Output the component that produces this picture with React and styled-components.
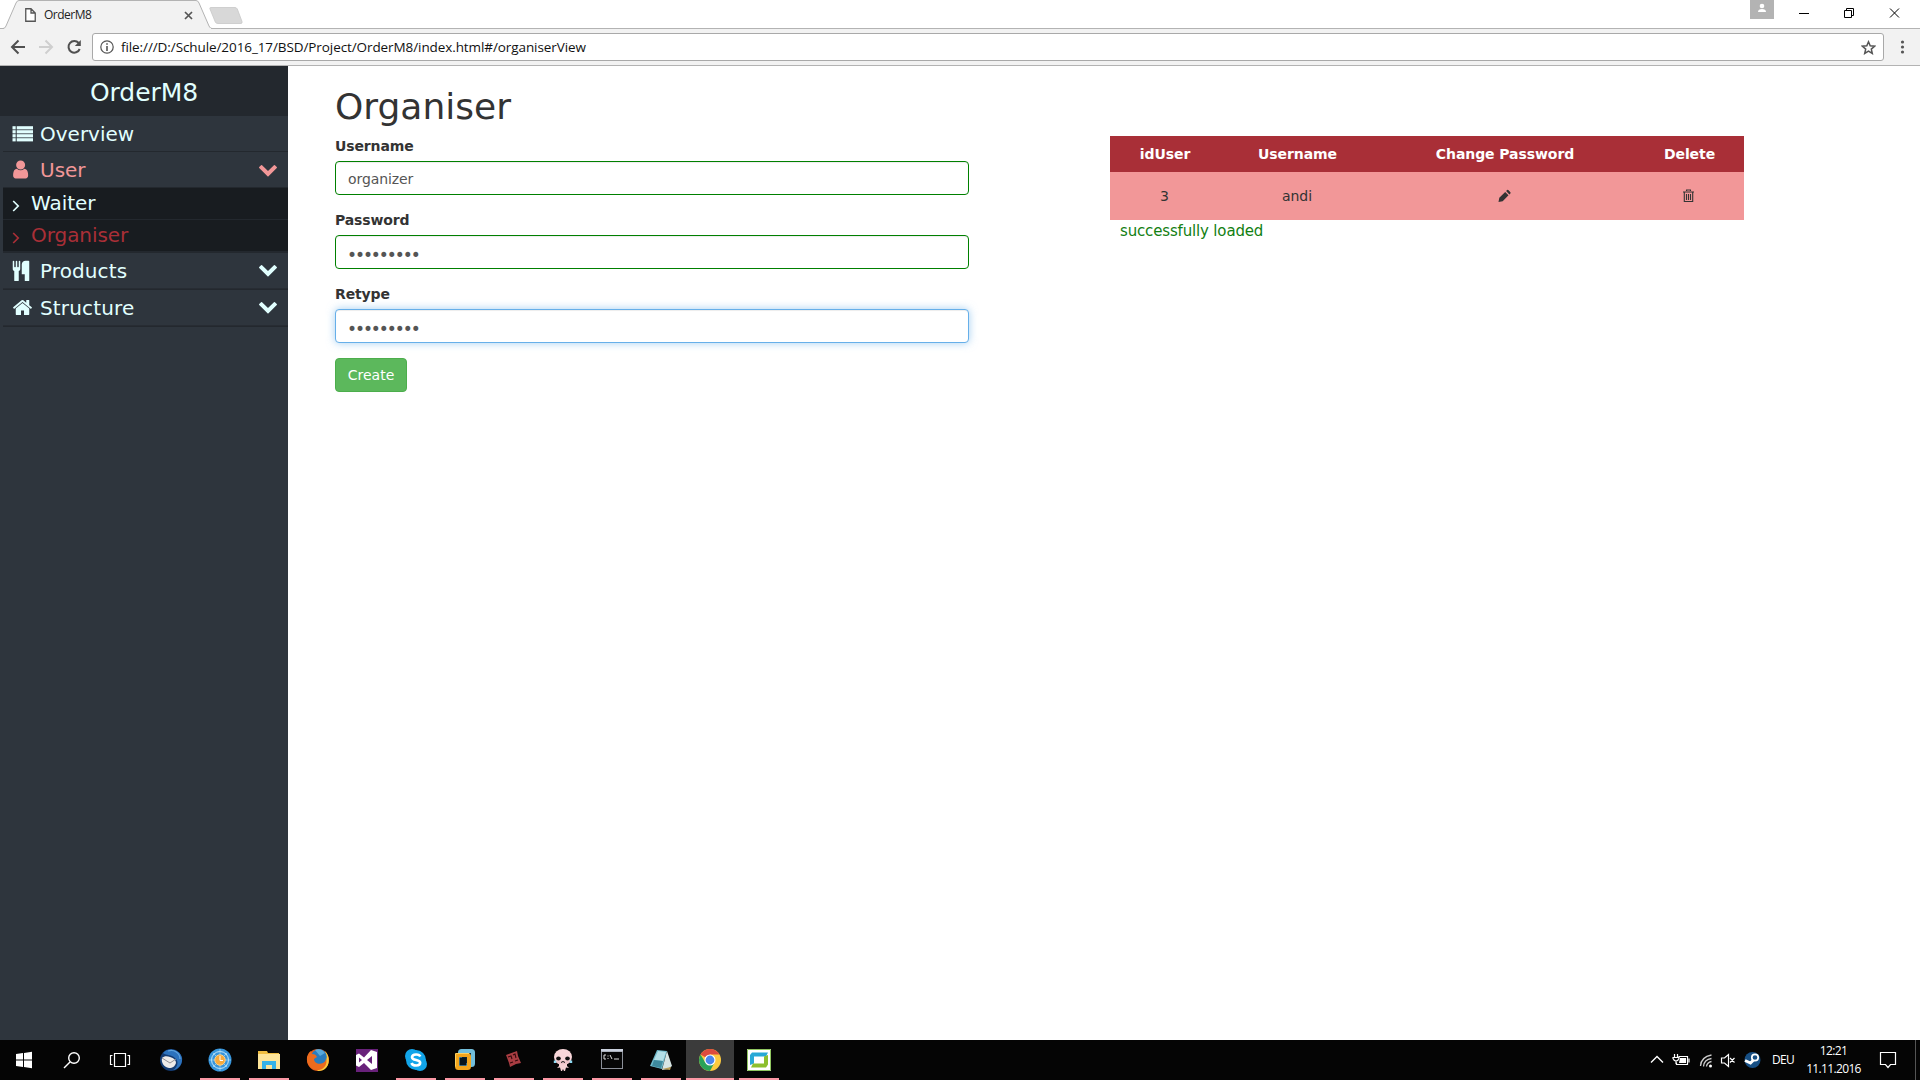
import React from "react";
import styled, { createGlobalStyle } from "styled-components";

const Global = createGlobalStyle`
  * { box-sizing: border-box; }
  html, body { margin: 0; overflow: hidden; background: #fff; }
  body { font-family: Verdana, "DejaVu Sans", sans-serif; font-size: 14px; line-height: 20px; color: #333; }
`;

const Screen = styled.div`
  width: 1920px;
  height: 1080px;
  display: flex;
  flex-direction: column;
  overflow: hidden;
`;

/* ---------- browser chrome ---------- */
const TabStrip = styled.div`
  height: 29px;
  display: flex;
  align-items: flex-start;
  border-bottom: 1px solid #b3b3b3;
  font-family: "Open Sans", "Noto Sans", sans-serif;
`;
const Tab = styled.div`
  position: relative;
  width: 216px;
  height: 29px;
  padding: 1px 23px 0 25px;
  display: flex;
  align-items: center;
`;
const TabShape = styled.svg`
  position: absolute;
  inset: 0;
`;
const TabTitle = styled.span`
  position: relative;
  flex: 1;
  margin-left: 8px;
  font-size: 12px;
  letter-spacing: -0.5px;
  line-height: 16px;
  color: #222;
`;
const TabIcon = styled.svg`
  position: relative;
  display: block;
`;
const NewTab = styled.svg`
  display: block;
  margin: 7px 0 0 -8px;
`;
const WindowButtons = styled.div`
  margin-left: auto;
  display: flex;
`;
const Toolbar = styled.div`
  height: 37px;
  padding: 4px 9px 4px 8px;
  display: flex;
  align-items: center;
  background: #f2f2f2;
  border-bottom: 1px solid #b3b3b3;
`;
const NavIcons = styled.svg`
  display: block;
  width: 84px;
  height: 28px;
`;
const UrlBox = styled.div`
  width: 1792px;
  height: 28px;
  padding: 0 7px;
  display: flex;
  align-items: center;
  background: #fff;
  border: 1px solid #a9a9a9;
  border-radius: 3px;
`;
const Url = styled.span`
  flex: 1;
  margin-left: 7px;
  font-family: "Open Sans", "Noto Sans", sans-serif;
  font-size: 13.5px;
  letter-spacing: -0.09px;
  color: #111;
`;
const MenuDots = styled.svg`
  display: block;
  margin-left: auto;
`;

/* ---------- page ---------- */
const Page = styled.div`
  height: 974px;
  display: flex;
`;
const Sidebar = styled.nav`
  width: 288px;
  background: #2e353d;
  color: #e1ffff;
  font-size: 20px;
`;
const Brand = styled.div`
  height: 50px;
  padding-top: 3px;
  background: #23282e;
  line-height: 47px;
  font-size: 25px;
  letter-spacing: -0.05px;
  text-align: center;
`;
const MenuItem = styled.div`
  height: ${(p) => p.$h}px;
  padding: 0 10px ${(p) => (p.$heavy ? 2 : 0)}px 9px;
  margin-left: 3px;
  display: flex;
  align-items: center;
  border-bottom: 1px solid #23282e;
  box-shadow: ${(p) => (p.$heavy ? "inset 0 -1px 0 #272c33" : "none")};
  color: ${(p) => (p.$active ? "#f29798" : "inherit")};
`;
const MenuLabel = styled.span`
  flex: 1;
  padding-top: 1px;
  margin-left: 7px;
  line-height: 34px;
  letter-spacing: ${(p) => p.$track || 0}px;
`;
const SubItem = styled.div`
  height: ${(p) => (p.$active ? 33 : 32)}px;
  margin-left: 3px;
  padding: 0 0 1px 8px;
  display: flex;
  align-items: center;
  background: #181c20;
  border-bottom: ${(p) => (p.$active ? 2 : 1)}px solid #23282e;
  color: ${(p) => (p.$active ? "#a92f37" : "inherit")};
`;
const SubLabel = styled.span`
  margin-left: 11px;
  line-height: 28px;
  letter-spacing: -0.05px;
`;
const Glyph = styled.svg`
  display: block;
  fill: currentColor;
`;
const AngleGlyph = styled(Glyph)`
  margin: 5px 0 0 1px;
`;
const Content = styled.main`
  flex: 1;
  padding: 21px 0 0 47px;
  display: flex;
`;
const FormColumn = styled.form`
  width: 634px;
  display: flex;
  flex-direction: column;
  align-items: flex-start;
`;
const Title = styled.h1`
  margin: 0 0 9px;
  font-size: 36px;
  font-weight: 400;
  line-height: 40px;
`;
const Field = styled.div`
  margin-bottom: 15px;
`;
const Label = styled.label`
  display: block;
  margin-bottom: 5px;
  font-size: 14px;
  line-height: 20px;
  font-weight: 700;
  letter-spacing: -0.13px;
`;
const Input = styled.input`
  display: block;
  width: 634px;
  height: 34px;
  padding: ${(p) => (p.type === "password" ? "9px 12px 3px 11px" : "7px 12px 5px")};
  font: 14px/20px Verdana, "DejaVu Sans", sans-serif;
  font-size: ${(p) => (p.type === "password" ? 17 : 14)}px;
  letter-spacing: ${(p) => (p.type === "password" ? -2.07 : -0.1)}px;
  color: #555;
  background: #fff;
  border: 1px solid ${(p) => (p.$focused ? "#66afe9" : "#008000")};
  border-radius: 4px;
  outline: 0;
  box-shadow: ${(p) => (p.$focused ? "inset 0 1px 1px rgba(0,0,0,.075), 0 0 8px rgba(102,175,233,.6)" : "inset 0 1px 1px rgba(0,0,0,.075)")};
`;
const Create = styled.button`
  width: 72px;
  height: 34px;
  padding: 0;
  font: 14px/20px Verdana, "DejaVu Sans", sans-serif;
  color: #fff;
  background: #5cb85c;
  border: 1px solid #4cae4c;
  border-radius: 4px;
`;
const ListColumn = styled.section`
  width: 634px;
  margin: 49px 0 0 141px;
`;
const Table = styled.table`
  width: 634px;
  table-layout: fixed;
  border-collapse: collapse;
  text-align: center;
`;
const HeadCell = styled.th`
  width: ${(p) => p.$w}px;
  height: 36px;
  padding: 0 0 0 1px;
  background: #a92f37;
  color: #fff;
  font-weight: 700;
  letter-spacing: -0.08px;
`;
const Cell = styled.td`
  height: 48px;
  padding: 0;
  background: #f29798;
  svg { margin: 0 auto; transform: translateX(-0.5px); }
`;
const Status = styled.div`
  padding: 1px 0 0 10px;
  font-size: 15px;
  line-height: 21px;
  letter-spacing: -0.16px;
  color: #128012;
`;

/* ---------- taskbar ---------- */
const Taskbar = styled.footer`
  height: 40px;
  display: flex;
  background: #050505;
  color: #fff;
  font-family: "Open Sans", "Noto Sans", sans-serif;
`;
const SystemIcons = styled.svg`
  display: block;
  width: 147px;
  height: 40px;
`;
const Apps = styled.div`
  display: flex;
`;
const TaskButton = styled.div`
  width: 48px;
  height: 40px;
  margin-right: 1px;
  display: flex;
  flex-direction: column;
  align-items: center;
  justify-content: space-between;
  padding-top: 8px;
  background: ${(p) => (p.$focused ? "#3b3b3b" : "transparent")};
`;
const Running = styled.div`
  width: ${(p) => (p.$focused ? 48 : 40)}px;
  height: 2px;
  background: ${(p) => (p.$on ? "#fb98a5" : "transparent")};
`;
const Tray = styled.div`
  margin-left: auto;
  display: flex;
  align-items: center;
`;
const Language = styled.span`
  width: 29px;
  padding-left: 1px;
  font-size: 12px;
  letter-spacing: -0.7px;
`;
const Clock = styled.div`
  width: 67px;
  font-size: 12px;
  line-height: 18px;
  letter-spacing: -0.65px;
  text-align: center;
`;
const TrayEnd = styled.div`
  width: 5px;
  height: 40px;
  border-left: 1px solid #555;
`;

const paths = {
  user: "M1536 1399q0 109-62.5 187t-150.5 78h-854q-88 0-150.5-78t-62.5-187q0-85 8.5-160.5t31.5-152 58.5-131 94-89 134.5-34.5q131 128 313 128t313-128q76 0 134.5 34.5t94 89 58.5 131 31.5 152 8.5 160.5zm-256-887q0 159-112.5 271.5t-271.5 112.5-271.5-112.5-112.5-271.5 112.5-271.5 271.5-112.5 271.5 112.5 112.5 271.5z",
  cutlery: "M832 128v640q0 61-35.5 111t-92.5 70v779q0 52-38 90t-90 38h-128q-52 0-90-38t-38-90v-779q-57-20-92.5-70t-35.5-111v-640q0-26 19-45t45-19 45 19 19 45v416q0 26 19 45t45 19 45-19 19-45v-416q0-26 19-45t45-19 45 19 19 45v416q0 26 19 45t45 19 45-19 19-45v-416q0-26 19-45t45-19 45 19 19 45zm768 0v1600q0 52-38 90t-90 38h-128q-52 0-90-38t-38-90v-512h-224q-13 0-22.5-9.5t-9.5-22.5v-800q0-132 94-226t226-94h256q26 0 45 19t19 45z",
  home: "M1472 992v480q0 26-19 45t-45 19h-384v-384h-256v384h-384q-26 0-45-19t-19-45v-480q0-1 .5-3t.5-3l575-474 575 474q1 2 1 6zm223-69l-62 74q-8 9-21 11h-3q-13 0-21-7l-692-577-692 577q-12 8-24 7-13-2-21-11l-62-74q-8-10-7-23.5t11-21.5l719-599q32-26 76-26t76 26l244 204v-195q0-14 9-23t23-9h192q14 0 23 9t9 23v408l219 182q10 8 11 21.5t-7 23.5z",
  down: "M1683 808l-742 741q-19 19-45 19t-45-19l-742-741q-19-19-19-45.5t19-45.5l166-165q19-19 45-19t45 19l531 531 531-531q19-19 45-19t45 19l166 165q19 19 19 45.5t-19 45.5z",
};

const Down = () => (
  <Glyph width="20" height="20" viewBox="0 90 1792 1792"><path d={paths.down} /></Glyph>
);
const Angle = () => (
  <AngleGlyph width="8" height="12" viewBox="0 0 8 12"><path d="M1.200 1L6.200 6L1.200 11" fill="none" stroke="currentColor" strokeWidth="1.700" /></AngleGlyph>
);
const ListIcon = () => (
  <Glyph width="21" height="16" viewBox="0 0 21 16">
    {[0, 4, 8, 12].map((y) => (
      <g key={y}><rect x="0.500" y={y + 0.200} width="3.200" height="3.200" /><rect x="4.700" y={y + 0.200} width="16.300" height="3.200" /></g>
    ))}
  </Glyph>
);

const appIcons = [
  { name: "thunderbird", art: (
    <><circle cx="12" cy="12" r="11" fill="#143c73" /><path d="M4 5C9-1 21 1 23 10c1 6-4 12-9 12 5-3 6-9 2-12C12 6 8 8 4 5z" fill="#2c72bd" /><path d="M9 3c6-2 12 2 12 8" fill="none" stroke="#5fa3de" strokeWidth="1.200" /><path d="M3 10c2-2 5-2 8-1 4 1 6 3 6 6-1 3-3 5-7 5-5-1-8-5-7-10z" fill="#edebe9" /><path d="M3 10l8 5 6-4" fill="none" stroke="#8f8f96" /></>
  ) },
  { name: "compass", on: true, art: (
    <><circle cx="12" cy="12" r="11.5" fill="#3695dc" /><circle cx="12" cy="12" r="8.500" fill="none" stroke="#c2e6fb" /><path d="M12 1v22M1 12h22M5 5l14 14M19 5L5 19" stroke="#9ad4f5" strokeWidth=".8" /><circle cx="12" cy="12" r="5.200" fill="#f6a93b" stroke="#f8d08c" /><path d="M12 8v4.500h3" stroke="#fff" fill="none" /></>
  ) },
  { name: "explorer", on: true, art: (
    <><path d="M1 3h9l1 2h11v5H1z" fill="#f0be42" /><path d="M1 6h22v15H1z" fill="#fde499" /><path d="M5 13h14v8h-4v-4H9v4H5z" fill="#35b2e8" /></>
  ) },
  { name: "firefox", art: (
    <><circle cx="12" cy="12" r="11" fill="#e65c1a" /><path d="M19 3c5 5 5 14 0 18-3 2-6 2-8 2 8-5 10-12 8-20z" fill="#fbc93a" /><circle cx="13" cy="9" r="7.800" fill="#2a7cbd" /><path d="M9 2c4-2 8 0 10 3l-5 3z" fill="#59aadb" /><path d="M1 9c1-3 2-5 4-6l1 3c3 0 4 1 5 3l-3 2c0 4 5 6 9 4 2-1 3-3 3-5 2 6-2 12-8 12-7 0-12-6-11-13z" fill="#ed6b1d" /></>
  ) },
  { name: "visual-studio", art: (
    <><path d="M1 1h22v23H1z" fill="#68217a" /><path d="M16 2l6 2v16l-6 2-7-7-5 4-3-1.500V7l3-1.500 5 4zM17 8l-5 4 5 4zM4 9.500v5l3-2.500z" fill="#fff" fillRule="evenodd" /></>
  ) },
  { name: "skype", on: true, art: (
    <><circle cx="8" cy="8" r="7" fill="#12a5ea" /><circle cx="16" cy="16" r="7" fill="#12a5ea" /><circle cx="12" cy="12" r="10" fill="#12a5ea" /><path d="M16.300 8.500c-1-2.700-8-3-8.300.700 0 3.800 8.200 1.800 8.200 5.500 0 3.700-7.700 3.500-8.700.300" fill="none" stroke="#fff" strokeWidth="2.600" /></>
  ) },
  { name: "vmware", on: true, art: (
    <><rect x="7" y="3" width="13" height="14" rx="1.500" fill="#102d3c" stroke="#72bedb" strokeWidth="4" /><rect x="4" y="7" width="12" height="13" rx="1.500" fill="none" stroke="#f3a51c" strokeWidth="4" /><rect x="6.500" y="9.500" width="7" height="8" fill="#06151d" /><path d="M2.500 18.500V5.500H16" fill="none" stroke="#ffd15d" /></>
  ) },
  { name: "red-tag", on: true, art: (
    <><path d="M4 7l11-4 1 5 3 7-5 1-6 3-1-4z" fill="#a93d42" /><path d="M6 9l3-1 1 3M11 7l2-1 1 4M8 15l3-1M13 13l3-1" stroke="#33090c" fill="none" strokeWidth="1.100" /></>
  ) },
  { name: "isaac", on: true, art: (
    <><path d="M8 16h8v2l2 2-3-.500-1 3.500h-1l-1-2-1 2h-1l-1-3.500-3 .500 2-2z" fill="#f6d0d3" /><ellipse cx="12" cy="9" rx="9" ry="8" fill="#fad7da" /><path d="M4 12.500h16q-2 4-8 4t-8-4z" fill="#efc3c8" /><ellipse cx="7.500" cy="10.500" rx="2.300" ry="2" fill="#111" /><ellipse cx="16.500" cy="10.500" rx="2.300" ry="2" fill="#111" /><path d="M4 12.500v2.500M20 12.500v2.500" stroke="#8edaf2" strokeWidth="2.400" /><path d="M10 14.500l2-1 2 1" stroke="#111" fill="none" /></>
  ) },
  { name: "console", on: true, art: (
    <><path d="M1 1h22v20H1z" fill="#8b8f98" /><path d="M1 1h22v2.500H1z" fill="#c9d0dd" /><path d="M2 4h20v16H2z" fill="#060606" /><path d="M6 7H4v4h2M8 7.500v1M8 10v1M10 7l2 4M14 11h5" stroke="#ddd" fill="none" /></>
  ) },
  { name: "notepad", on: true, art: (
    <><path d="M8 2l10 1-5 18-12-3z" fill="#6fb9ca" /><path d="M9 3l8 1-3 9-9-1z" fill="#b4dfe7" /><path d="M5 12l9 1-2 7-9-2z" fill="#3e8a9d" /><path d="M18 3l5 15-4 3-6 1z" fill="#d7e5e4" /><path d="M13 21l8 1 1-3z" fill="#b99c54" /></>
  ) },
  { name: "chrome", on: true, focused: true, art: (
    <><circle cx="12" cy="12" r="11" fill="#fcca3f" /><path d="M12 12L2.500 6.500A11 11 0 0 1 21.500 6.500H12z" fill="#dd4b3e" /><path d="M2.500 6.500A11 11 0 0 0 12 23l4.500-8.500L12 12 7 14z" fill="#28a259" /><circle cx="12" cy="12" r="5.500" fill="#fff" /><circle cx="12" cy="12" r="4.400" fill="#4a86ec" /></>
  ) },
  { name: "green-frame", on: true, art: (
    <><path d="M0 1h24v22H0z" fill="#fff" /><path d="M.5 1.500h23v21H.5z" fill="none" stroke="#8fc560" /><path d="M5 4.500h16l-2 4H7v7l-4 1.500V7z" fill="#28a9d6" /><path d="M21 7v9.500l-2 3H4l2-4h11V8.500z" fill="#8dbf2e" /></>
  ) },
];

export default function App() {
  return (
    <Screen>
      <Global />
      <TabStrip>
        <Tab>
          <TabShape width="216" height="29">
            <path d="M0 28.500H3Q5 28.500 6 26L16 3Q17 .5 19 .5H196Q198 .5 199 3L209 26Q210 28.500 212 28.500H216" fill="#f2f2f2" stroke="#b3b3b3" />
            <path d="M4.500 28.500H211" stroke="#f2f2f2" />
          </TabShape>
          <TabIcon width="11" height="14"><path d="M.75.75H6L10.250 5V13.250H.75zM6 .75V5H10.250" fill="#fff" stroke="#555" strokeWidth="1.300" /></TabIcon>
          <TabTitle>OrderM8</TabTitle>
          <TabIcon width="9" height="9"><path d="M1 1l7 7M8 1l-7 7" stroke="#555" strokeWidth="1.700" /></TabIcon>
        </Tab>
        <NewTab width="36" height="18"><path d="M2.500 .5H27Q28.500 .5 29.300 2L34 14.500Q34.500 16.500 33 16.500H10Q8 16.500 7.300 15L2 2Q1.500 .5 2.500 .5z" fill="#d8d8d8" stroke="#c8c8c8" strokeWidth=".8" /></NewTab>
        <WindowButtons>
          <svg width="170" height="28">
            <path d="M0 0h24v19H0z" fill="#b3b3b3" />
            <circle cx="12" cy="6" r="2.300" fill="#fff" /><path d="M8 12q0-3 4-3t4 3z" fill="#fff" />
            <path d="M49 13.500h10M94.500 10.500h7v7h-7zM96.500 10.500v-2h7v7h-2M140 8.500l9 9M149 8.500l-9 9" fill="none" stroke="#000" />
          </svg>
        </WindowButtons>
      </TabStrip>
      <Toolbar>
        <NavIcons>
          <path d="M17 14H4M10.500 7.500L4 14l6.500 6.500" fill="none" stroke="#505050" strokeWidth="2" />
          <path d="M31 14h13M37.500 7.500L44 14l-6.500 6.500" fill="none" stroke="#cfcfcf" strokeWidth="2" />
          <path d="M70.700 10A5.800 5.800 0 1 0 71.700 16" fill="none" stroke="#505050" strokeWidth="2" /><path d="M72.800 7v6h-6z" fill="#505050" />
        </NavIcons>
        <UrlBox>
          <svg width="14" height="14"><circle cx="7" cy="7" r="6.200" fill="none" stroke="#555" strokeWidth="1.200" /><path d="M7 6v5M7 3.200v1.600" stroke="#555" strokeWidth="1.600" /></svg>
          <Url>file:///D:/Schule/2016_17/BSD/Project/OrderM8/index.html#/organiserView</Url>
          <svg width="15" height="15"><path d="M7.500 1.800l1.700 4 4.400.4-3.300 2.900 1 4.300-3.800-2.300-3.800 2.300 1-4.300-3.300-2.900 4.400-.4z" fill="none" stroke="#555" strokeWidth="1.500" /></svg>
        </UrlBox>
        <MenuDots width="20" height="16"><circle cx="11.500" cy="3" r="1.600" fill="#555" /><circle cx="11.500" cy="8" r="1.600" fill="#555" /><circle cx="11.500" cy="13" r="1.600" fill="#555" /></MenuDots>
      </Toolbar>

      <Page>
        <Sidebar>
          <Brand>OrderM8</Brand>
          <MenuItem $h={36}><ListIcon /><MenuLabel>Overview</MenuLabel></MenuItem>
          <MenuItem $h={36} $active>
            <Glyph width="21" height="21" viewBox="160 0 1792 1792"><path d={paths.user} /></Glyph>
            <MenuLabel>User</MenuLabel><Down />
          </MenuItem>
          <SubItem><Angle /><SubLabel>Waiter</SubLabel></SubItem>
          <SubItem $active><Angle /><SubLabel>Organiser</SubLabel></SubItem>
          <MenuItem $h={37} $heavy>
            <Glyph width="21" height="21" viewBox="128 0 1792 1792"><path d={paths.cutlery} /></Glyph>
            <MenuLabel $track={0.1}>Products</MenuLabel><Down />
          </MenuItem>
          <MenuItem $h={37} $heavy>
            <Glyph width="21" height="21" viewBox="0 0 1792 1792"><path d={paths.home} /></Glyph>
            <MenuLabel $track={0.15}>Structure</MenuLabel><Down />
          </MenuItem>
        </Sidebar>
        <Content>
          <FormColumn>
            <Title>Organiser</Title>
            <Field><Label>Username</Label><Input type="text" defaultValue="organizer" /></Field>
            <Field><Label>Password</Label><Input type="password" defaultValue="organizer" /></Field>
            <Field><Label>Retype</Label><Input type="password" defaultValue="organizer" $focused /></Field>
            <Create type="button">Create</Create>
          </FormColumn>
          <ListColumn>
            <Table>
              <thead>
                <tr><HeadCell $w={109}>idUser</HeadCell><HeadCell $w={156}>Username</HeadCell><HeadCell $w={259}>Change Password</HeadCell><HeadCell $w={110}>Delete</HeadCell></tr>
              </thead>
              <tbody>
                <tr>
                  <Cell>3</Cell>
                  <Cell>andi</Cell>
                  <Cell><Glyph width="14" height="14" viewBox="0 0 14 14"><path d="M1 13l.8-4.200L7.700 3l3.300 3.300-5.800 5.900zM8.600 2.100l1-1q.6-.5 1.200 0l2.100 2.100q.5.600 0 1.200l-1 1z" /></Glyph></Cell>
                  <Cell><Glyph width="12" height="14" viewBox="0 0 12 14"><path d="M4 2V1h4v1M.5 3h11M1.800 3.500v9h8.400v-9M4 5v6M6 5v6M8 5v6" fill="none" stroke="currentColor" strokeWidth="1.100" /></Glyph></Cell>
                </tr>
              </tbody>
            </Table>
            <Status>successfully loaded</Status>
          </ListColumn>
        </Content>
      </Page>

      <Taskbar>
        <SystemIcons>
          <path d="M16 14l7-1v6.500h-7zM24 12.900l8-1.100v7.700h-8zM16 20.500h7V27l-7-1zM24 20.500h8v7.700l-8-1.100z" fill="#fff" />
          <circle cx="74" cy="18" r="5.300" fill="none" stroke="#fff" strokeWidth="1.400" /><path d="M70 22l-6 6" stroke="#fff" strokeWidth="1.500" />
          <path d="M114.500 13.500h11v13h-11zM112.500 15.500h-2v9h2M127.500 15.500h2v9h-2" fill="none" stroke="#fff" strokeWidth="1.200" />
        </SystemIcons>
        <Apps>
          {appIcons.map((a) => (
            <TaskButton key={a.name} $focused={a.focused}>
              <svg width="24" height="24" viewBox="0 0 24 24">{a.art}</svg>
              <Running $on={a.on} $focused={a.focused} />
            </TaskButton>
          ))}
        </Apps>
        <Tray>
          <svg width="122" height="40">
            <path d="M2 22.500l6-6 6 6" fill="none" stroke="#fff" strokeWidth="1.400" />
            <path d="M29.500 16.500h9v8h-11v-2M40 18.500v4M25.500 14v3M28.500 14v3M24 17.500h6v1q-1 2.500-3 2.500t-3-2.500zM27 21v3" fill="none" stroke="#fff" strokeWidth="1.200" /><path d="M31 18h6v5h-7z" fill="#fff" />
            <path d="M51.500 26q.500-9 11-11M54.500 26.500q.500-7 8-8M57.500 26.500q.500-4 5-5" fill="none" stroke="#ccc" strokeWidth="1.300" /><circle cx="61.500" cy="26" r="1.500" fill="#fff" />
            <path d="M72.500 18h3l4-3.500v12l-4-3.500h-3zM81 18l4.500 4.500M85.500 18L81 22.500" fill="none" stroke="#fff" strokeWidth="1.200" />
            <circle cx="103.500" cy="20" r="8" fill="#174f84" /><circle cx="106" cy="17.500" r="3.200" fill="none" stroke="#fff" strokeWidth="1.700" /><path d="M96 20.500l5.500 2.500 3-3" stroke="#fff" strokeWidth="3" fill="none" />
          </svg>
          <Language>DEU</Language>
          <Clock>12:21<br />11.11.2016</Clock>
          <svg width="48" height="40"><path d="M13.500 12.500h15v12h-5l-2.500 3-2.500-3h-5z" fill="none" stroke="#fff" strokeWidth="1.200" /></svg>
          <TrayEnd />
        </Tray>
      </Taskbar>
    </Screen>
  );
}
